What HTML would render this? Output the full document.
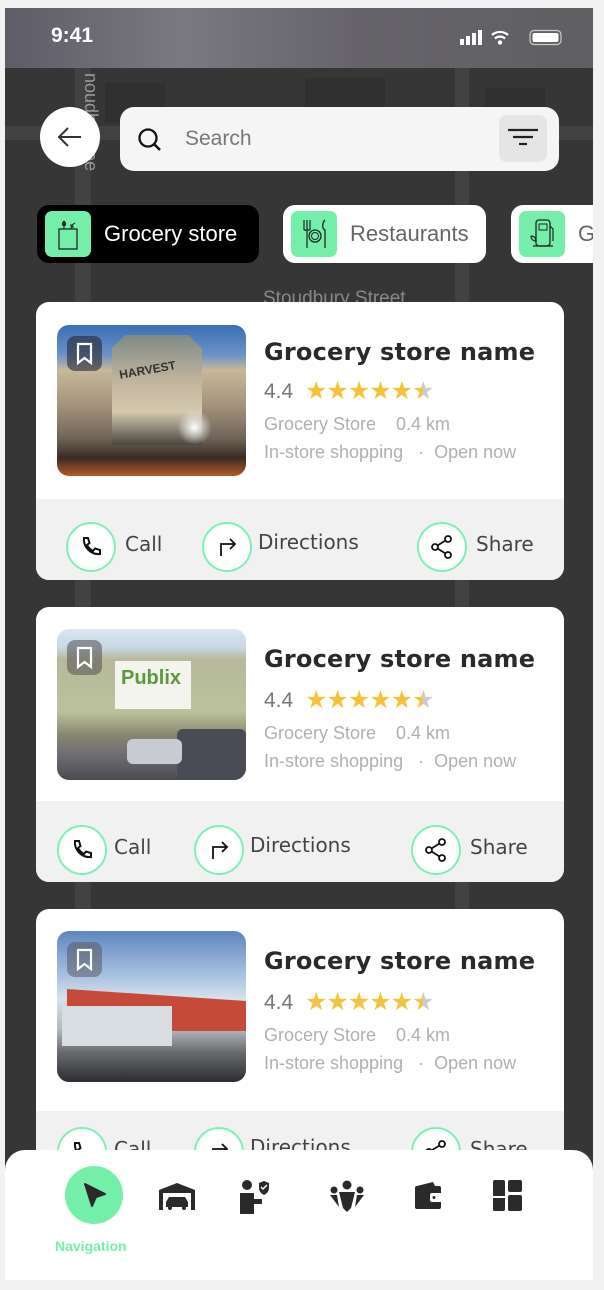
<!DOCTYPE html>
<html><head><meta charset="utf-8"><style>
*{margin:0;padding:0;box-sizing:border-box}
body{width:604px;height:1290px;background:#f2f2f2;position:relative;overflow:hidden;font-family:"Liberation Sans",sans-serif}
.phone{position:absolute;left:5px;top:8px;width:588px;height:1272px;background:#363636;overflow:hidden}
.abs{position:absolute}
.road{position:absolute;background:#424242}
.block{position:absolute;background:#303030}
.card{position:absolute;left:31px;width:528px;background:#fff;border-radius:13px;overflow:hidden}
.card .bot{position:absolute;left:0;right:0;bottom:0;background:#f1f1f1}
.img{position:absolute;left:21px;width:189px;height:151px;border-radius:12px;overflow:hidden}
.bm{position:absolute;left:10px;top:11px;width:35px;height:35px;border-radius:8px;background:rgba(40,40,50,.6)}
.title{position:absolute;left:228px;font-weight:bold;color:#2a2a2a;letter-spacing:.2px;font-family:"DejaVu Sans","Liberation Sans",sans-serif;font-size:24px}
.rate{position:absolute;left:228px;font-size:21px;color:#777}
.stars{position:absolute;left:269px;color:#f5c33b;font-size:25px;letter-spacing:-1px}
.sub{position:absolute;left:228px;font-size:18px;color:#b0b0b0;white-space:pre}
.circ{position:absolute;width:50px;height:50px;border-radius:50%;border:2px solid #7ef0b4;background:#fff;display:flex;align-items:center;justify-content:center}
.lbl{position:absolute;color:#444;font-family:"DejaVu Sans","Liberation Sans",sans-serif;font-size:20px}
.chip{position:absolute;top:197px;height:58px;border-radius:12px;display:flex;align-items:center}
.chip .ic{width:46px;height:46px;border-radius:7px;background:#74efaa;margin-left:8px;display:flex;align-items:center;justify-content:center}
.chip span{font-size:22px;margin-left:13px}
.half{background:linear-gradient(90deg,#f5c33b 50%,#ccc 50%);-webkit-background-clip:text;background-clip:text;color:transparent}
</style></head><body>
<div class="phone">
  <div class="road" style="left:70px;top:60px;width:16px;height:1100px"></div>
  <div class="road" style="left:0;top:118px;width:588px;height:14px"></div>
  <div class="road" style="left:450px;top:60px;width:14px;height:1100px"></div>
  <div class="block" style="left:100px;top:75px;width:60px;height:40px"></div>
  <div class="block" style="left:300px;top:70px;width:80px;height:30px"></div>
  <div class="block" style="left:480px;top:80px;width:60px;height:60px"></div>
  <div class="abs" style="left:0;top:0;width:588px;height:60px;background:linear-gradient(90deg,#5e5c66 0%,#7a7880 30%,#66646a 60%,#5f5f62 100%)"></div>
  <div class="abs" style="left:46px;top:16px;color:#fff;font-size:21px;font-weight:bold">9:41</div>
  <svg class="abs" style="left:455px;top:20px" width="110" height="20">
    <rect x="0" y="11" width="4" height="6" fill="#fff"/><rect x="6" y="8" width="4" height="9" fill="#fff"/><rect x="12" y="5" width="4" height="12" fill="#fff"/><rect x="18" y="2" width="4" height="15" fill="#fff"/>
    <path d="M32 7a12 12 0 0 1 16 0M35 10.5a7.5 7.5 0 0 1 10 0" stroke="#fff" stroke-width="2.2" fill="none"/><circle cx="40" cy="14.5" r="2.2" fill="#fff"/>
    <rect x="70" y="2.5" width="31" height="14" rx="4" fill="none" stroke="#ccc" stroke-width="1.2"/><rect x="72.5" y="5" width="26" height="9" rx="2" fill="#fff"/>
  </svg>
  <div class="abs" style="left:75px;top:65px;color:#999;font-size:18px;writing-mode:vertical-rl">noudh Stree</div>
  <div class="abs" style="left:258px;top:280px;color:#888;font-size:19px">Stoudbury Street</div>
  <div class="abs" style="left:35px;top:99px;width:60px;height:60px;border-radius:50%;background:#fff"></div>
  <svg class="abs" style="left:48px;top:112px" width="34" height="34"><path d="M28 17H6M15 8l-9 9 9 9" stroke="#333" stroke-width="2" fill="none"/></svg>
  <div class="abs" style="left:115px;top:99px;width:439px;height:64px;border-radius:14px;background:#f5f5f5"></div>
  <svg class="abs" style="left:131px;top:118px" width="28" height="28"><circle cx="12" cy="12" r="8.5" stroke="#111" stroke-width="2.3" fill="none"/><path d="M18 18l6 6" stroke="#111" stroke-width="2.5"/></svg>
  <div class="abs" style="left:180px;top:119px;font-size:21px;color:#777">Search</div>
  <div class="abs" style="left:494px;top:107px;width:48px;height:47px;border-radius:8px;background:#e5e5e5"></div>
  <svg class="abs" style="left:498px;top:118px" width="40" height="26"><path d="M5 4h30M10 11h20M16 18h8" stroke="#222" stroke-width="2.2"/></svg>
  <div class="chip" style="left:32px;width:222px;background:#000"><div class="ic"><svg width="26" height="34"><rect x="4" y="12" width="18" height="20" fill="none" stroke="#222" stroke-width="1.3"/><path d="M9 12V4M9 4c-2 2-2 4 0 5c2-1 2-3 0-5M16 12c0-3 2-5 4-6M15 8c2 0 3 1 3 3" stroke="#222" stroke-width="1.2" fill="none"/></svg></div><span style="color:#fff">Grocery store</span></div>
  <div class="chip" style="left:278px;width:203px;background:#fff"><div class="ic"><svg width="30" height="36"><path d="M5 4v10M8 4v10M11 4v10M5 14h6M8 14v18" stroke="#222" stroke-width="1.2" fill="none"/><circle cx="16" cy="20" r="6" fill="none" stroke="#222" stroke-width="1.3"/><circle cx="16" cy="20" r="3.5" fill="none" stroke="#222" stroke-width="1"/><path d="M26 4c-3 3-3 9 0 10v18" stroke="#222" stroke-width="1.3" fill="none"/></svg></div><span style="color:#666">Restaurants</span></div>
  <div class="chip" style="left:506px;width:120px;background:#fff"><div class="ic"><svg width="30" height="36"><rect x="9" y="4" width="14" height="26" rx="3" fill="none" stroke="#222" stroke-width="1.3"/><rect x="12" y="8" width="8" height="6" fill="none" stroke="#222"/><path d="M23 10l3 3v12M6 30h20M4 20c3 0 5 2 5 5c-3 0-5-2-5-5" stroke="#222" stroke-width="1.2" fill="none"/></svg></div><span style="color:#666">G</span></div>

  <div class="card" style="top:294px;height:278px">
    <div class="img" style="top:23px;background:linear-gradient(180deg,#3a6eb8 0%,#6d93c6 20%,#c8b89a 30%,#a09078 55%,#6e6458 75%,#3b2a22 88%,#b45a2a 100%)">
      <div class="abs" style="left:55px;top:10px;width:90px;height:110px;background:linear-gradient(180deg,#7f8a86,#bfb39c 40%,#d4c8ae 70%,#4a4640);clip-path:polygon(15% 0,85% 0,100% 12%,100% 100%,0 100%,0 12%)"></div>
      <div class="abs" style="left:120px;top:85px;width:35px;height:35px;border-radius:50%;background:radial-gradient(#fff,rgba(255,255,255,0) 70%)"></div>
      <div class="abs" style="left:62px;top:38px;font-size:12px;font-weight:bold;color:#333;transform:rotate(-10deg)">HARVEST</div>
      <div class="bm"><svg width="35" height="35"><path d="M11 8h13v19l-6.5-5-6.5 5z" fill="none" stroke="#fff" stroke-width="2.2"/></svg></div>
    </div>
    <div class="title" style="top:36px">Grocery store name</div>
    <div class="rate" style="top:78px">4.4</div>
    <div class="stars" style="top:74px">★★★★★<span class="half">★</span></div>
    <div class="sub" style="top:112px">Grocery Store    0.4 km</div>
    <div class="sub" style="top:140px">In-store shopping   ·  Open now</div>
    <div class="bot" style="height:81px"></div>
    <div class="circ" style="left:30px;top:220px"><svg width="24" height="24"><path d="M5 3l4 0 1.5 5-2.5 2c1.5 3 3 4.5 6 6l2-2.5 5 1.5v4c-9 1-17-7-16-16z" fill="none" stroke="#111" stroke-width="2"/></svg></div>
    <div class="lbl" style="left:89px;top:230px">Call</div>
    <div class="circ" style="left:166px;top:220px"><svg width="24" height="24"><path d="M6 21V9h13M15 4l5 5-5 5" fill="none" stroke="#111" stroke-width="1.8"/></svg></div>
    <div class="lbl" style="left:222px;top:228px">Directions</div>
    <div class="circ" style="left:381px;top:220px"><svg width="26" height="26"><circle cx="19" cy="5" r="3" fill="none" stroke="#111" stroke-width="1.8"/><circle cx="6" cy="13" r="3" fill="none" stroke="#111" stroke-width="1.8"/><circle cx="19" cy="21" r="3" fill="none" stroke="#111" stroke-width="1.8"/><path d="M8.5 11.5l8-5M8.5 14.5l8 5" stroke="#111" stroke-width="1.8"/></svg></div>
    <div class="lbl" style="left:440px;top:230px">Share</div>
  </div>

  <div class="card" style="top:599px;height:275px">
    <div class="img" style="top:22px;background:linear-gradient(180deg,#dbe6f0 0%,#c8d8e6 12%,#b8b89a 20%,#b9c29a 55%,#8a8770 70%,#6a6a70 85%,#4a4a50 100%)">
      <div class="abs" style="left:58px;top:32px;width:76px;height:48px;background:#f4f4ee"></div>
      <div class="abs" style="left:64px;top:38px;font-size:20px;font-weight:bold;color:#5a9a3a">Publix</div>
      <div class="abs" style="left:120px;top:100px;width:69px;height:51px;background:#4a4c55;border-radius:6px 6px 0 0"></div>
      <div class="abs" style="left:70px;top:110px;width:55px;height:25px;background:#c8ccd2;border-radius:6px"></div>
      <div class="bm" style="background:rgba(90,90,90,.6)"><svg width="35" height="35"><path d="M11 8h13v19l-6.5-5-6.5 5z" fill="none" stroke="#fff" stroke-width="2.2"/></svg></div>
    </div>
    <div class="title" style="top:38px">Grocery store name</div>
    <div class="rate" style="top:82px">4.4</div>
    <div class="stars" style="top:78px">★★★★★<span class="half">★</span></div>
    <div class="sub" style="top:116px">Grocery Store    0.4 km</div>
    <div class="sub" style="top:144px">In-store shopping   ·  Open now</div>
    <div class="bot" style="height:81px"></div>
    <div class="circ" style="left:21px;top:218px"><svg width="24" height="24"><path d="M5 3l4 0 1.5 5-2.5 2c1.5 3 3 4.5 6 6l2-2.5 5 1.5v4c-9 1-17-7-16-16z" fill="none" stroke="#111" stroke-width="2"/></svg></div>
    <div class="lbl" style="left:78px;top:228px">Call</div>
    <div class="circ" style="left:158px;top:218px"><svg width="24" height="24"><path d="M6 21V9h13M15 4l5 5-5 5" fill="none" stroke="#111" stroke-width="1.8"/></svg></div>
    <div class="lbl" style="left:214px;top:226px">Directions</div>
    <div class="circ" style="left:375px;top:218px"><svg width="26" height="26"><circle cx="19" cy="5" r="3" fill="none" stroke="#111" stroke-width="1.8"/><circle cx="6" cy="13" r="3" fill="none" stroke="#111" stroke-width="1.8"/><circle cx="19" cy="21" r="3" fill="none" stroke="#111" stroke-width="1.8"/><path d="M8.5 11.5l8-5M8.5 14.5l8 5" stroke="#111" stroke-width="1.8"/></svg></div>
    <div class="lbl" style="left:434px;top:228px">Share</div>
  </div>

  <div class="card" style="top:901px;height:275px">
    <div class="img" style="top:22px;background:linear-gradient(180deg,#5f86c0 0%,#a9c2e0 30%,#d8e2ec 45%,#b5b8bc 65%,#6a6c70 80%,#2d2d30 100%)">
      <div class="abs" style="left:10px;top:40px;width:179px;height:60px;background:#c64a3a;clip-path:polygon(0 30%,100% 50%,100% 100%,0 100%)"></div>
      <div class="abs" style="left:5px;top:75px;width:110px;height:40px;background:#d8dde2"></div>
      <div class="bm" style="background:rgba(90,90,100,.55)"><svg width="35" height="35"><path d="M11 8h13v19l-6.5-5-6.5 5z" fill="none" stroke="#fff" stroke-width="2.2"/></svg></div>
    </div>
    <div class="title" style="top:38px">Grocery store name</div>
    <div class="rate" style="top:82px">4.4</div>
    <div class="stars" style="top:78px">★★★★★<span class="half">★</span></div>
    <div class="sub" style="top:116px">Grocery Store    0.4 km</div>
    <div class="sub" style="top:144px">In-store shopping   ·  Open now</div>
    <div class="bot" style="height:73px"></div>
    <div class="circ" style="left:21px;top:218px"><svg width="24" height="24"><path d="M5 3l4 0 1.5 5-2.5 2c1.5 3 3 4.5 6 6l2-2.5 5 1.5v4c-9 1-17-7-16-16z" fill="none" stroke="#111" stroke-width="2"/></svg></div>
    <div class="lbl" style="left:78px;top:228px">Call</div>
    <div class="circ" style="left:158px;top:218px"><svg width="24" height="24"><path d="M6 21V9h13M15 4l5 5-5 5" fill="none" stroke="#111" stroke-width="1.8"/></svg></div>
    <div class="lbl" style="left:214px;top:226px">Directions</div>
    <div class="circ" style="left:375px;top:218px"><svg width="26" height="26"><circle cx="19" cy="5" r="3" fill="none" stroke="#111" stroke-width="1.8"/><circle cx="6" cy="13" r="3" fill="none" stroke="#111" stroke-width="1.8"/><circle cx="19" cy="21" r="3" fill="none" stroke="#111" stroke-width="1.8"/><path d="M8.5 11.5l8-5M8.5 14.5l8 5" stroke="#111" stroke-width="1.8"/></svg></div>
    <div class="lbl" style="left:434px;top:228px">Share</div>
  </div>

  <div class="abs" style="left:0;top:1142px;width:588px;height:130px;background:#fff;border-radius:20px 20px 0 0"></div>
  <div class="abs" style="left:60px;top:1158px;width:58px;height:58px;border-radius:50%;background:#74efaa"></div>
  <svg class="abs" style="left:70px;top:1168px" width="38" height="38"><path d="M10 8l20 10-9 3-4 9z" fill="#2a2a2a" stroke="#2a2a2a" stroke-width="2" stroke-linejoin="round"/></svg>
  <div class="abs" style="left:50px;top:1230px;font-size:14px;color:#74efaa;font-weight:bold">Navigation</div>
  <svg class="abs" style="left:152px;top:1172px" width="40" height="34"><path d="M2 30V10L20 3l18 7v20h-4V13H6v17z" fill="#2a2a2a"/><path d="M9 27v-5l3-5h16l3 5v5z" fill="#2a2a2a"/><circle cx="13" cy="28" r="2" fill="#2a2a2a"/><circle cx="27" cy="28" r="2" fill="#2a2a2a"/></svg>
  <svg class="abs" style="left:232px;top:1170px" width="34" height="36"><circle cx="10" cy="7" r="5" fill="#2a2a2a"/><path d="M3 15h14v6h8v5h-8v10H3z" fill="#2a2a2a"/><path d="M22 5l5-2 5 2v5c0 4-3 6-5 7c-2-1-5-3-5-7z" fill="#2a2a2a"/><path d="M24 9l2 2 4-4" stroke="#fff" stroke-width="1.4" fill="none"/></svg>
  <svg class="abs" style="left:324px;top:1172px" width="36" height="34"><circle cx="18" cy="5" r="4.5" fill="#2a2a2a"/><circle cx="5" cy="10" r="3.5" fill="#2a2a2a"/><circle cx="31" cy="10" r="3.5" fill="#2a2a2a"/><path d="M10 12h16l-4 16-4 4-4-4zM1 15h7l2 12zM35 15h-7l-2 12z" fill="#2a2a2a"/></svg>
  <svg class="abs" style="left:408px;top:1173px" width="32" height="30"><rect x="2" y="5" width="26" height="23" rx="2" fill="#2a2a2a"/><path d="M4 5l16-4 2 4" fill="#2a2a2a"/><rect x="17" y="12" width="12" height="9" rx="2" fill="#fff"/><circle cx="21" cy="16.5" r="1.5" fill="#2a2a2a"/></svg>
  <svg class="abs" style="left:488px;top:1172px" width="30" height="32"><rect x="0" y="0" width="12" height="31" rx="2" fill="#2a2a2a"/><rect x="15" y="0" width="14" height="12" rx="2" fill="#2a2a2a"/><rect x="15" y="15" width="14" height="16" rx="2" fill="#2a2a2a"/><rect x="0" y="19" width="12" height="12" rx="2" fill="#2a2a2a"/><rect x="0" y="16" width="12" height="2" fill="#fff"/></svg>
</div>
</body></html>
